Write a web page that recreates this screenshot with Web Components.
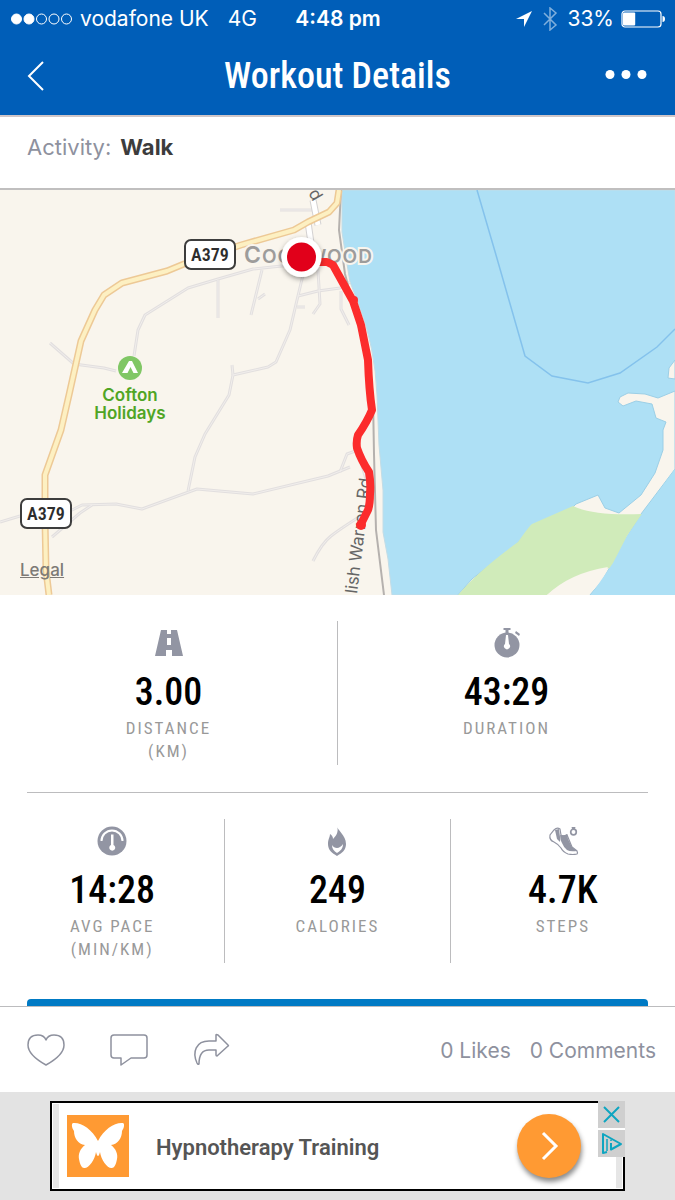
<!DOCTYPE html>
<html lang="en">
<head>
<meta charset="utf-8">
<meta name="viewport" content="width=device-width, initial-scale=1">
<title>Workout Details</title>
<style>
  :root {
    --brand: #005eb8;
    --muted: #8e919e;
    --line: #bcbcbe;
    --font-ui: Inter, "Liberation Sans", sans-serif;
    --font-narrow: "Roboto Condensed", "Liberation Sans Narrow", Roboto, sans-serif;
  }
  body {
    margin: 0;
    background: #fff;
    font-family: var(--font-ui);
  }
</style>
</head>
<body>
<workout-page>
  <status-bar slot="top" carrier="vodafone UK" network="4G" time="4:48 pm" battery="33"></status-bar>
  <nav-header slot="top">Workout Details</nav-header>
  <activity-row name="Walk"></activity-row>
  <route-map></route-map>
  <stat-row>
    <stat-cell icon="road" value="3.00">Distance<br>(km)</stat-cell>
    <stat-cell icon="stopwatch" value="43:29">Duration</stat-cell>
  </stat-row>
  <stat-row>
    <stat-cell icon="gauge" value="14:28">Avg pace<br>(min/km)</stat-cell>
    <stat-cell icon="flame" value="249">Calories</stat-cell>
    <stat-cell icon="shoe" value="4.7K">Steps</stat-cell>
  </stat-row>
  <action-bar slot="bottom" likes="0" comments="0"></action-bar>
  <ad-banner slot="bottom">Hypnotherapy Training</ad-banner>
</workout-page>

<script>
const icons = {
  road: `<path d="M8 3h6v4h4V3h6l6 26H19v-6h-6v6H2zM14 11v7h4v-7z" fill-rule="evenodd"/>`,
  stopwatch: `<path d="M12.500 1h7v2h-2v3h-3V3h-2z"/><path d="M25 4l4 3-1 2-4-3z"/><circle cx="16" cy="18" r="12.500"/><path d="M15 8h2l1 9a3 3 0 1 1-4 0z" fill="#fff"/>`,
  gauge: `<circle cx="16" cy="16" r="14.500"/><path d="M5.500 16a10.500 10.500 0 0 1 21 0" fill="none" stroke="#fff" stroke-width="2"/><path d="M15 9.500h2.500V20a3 3 0 1 1-2.500 0z" fill="#fff"/>`,
  flame: `<path d="M16 1c0 4 9 9 9 18 0 6-4 9-9 12-5-3-9-6-9-12 0-5 2-7 2-10 2 1 3 3 3 5 3-3 6-7 4-13z"/><path d="M11 20c1 2 3 3 5 3s5-2 6-4c0 5-3 7-6 9-3-2-5-4-5-8z" fill="#fff"/>`,
  shoe: `<path d="M7 5q3-3 6-1l1 6q3 2 6 0l5 12 5 4q1 2 0 3-4 1-9 0-5-2-7-6-3-4-7-6-5-2-4-7z" fill="none" stroke="currentColor" stroke-width="1.200"/><path d="M13 10q4 1 7-1l1 5 4 8 5 4q-7 1-10-1-3-2-5-7-2-3-2-8z"/><path d="M8 5l4-1 1 8v5l-3-3z"/><circle cx="26.500" cy="7" r="2.800" fill="none" stroke="currentColor" stroke-width="1.700"/><path d="M24.500 2h4l-1 3h-2z"/>`
};

class WorkoutPage extends HTMLElement {
  constructor() {
    super();
    this.attachShadow({ mode: 'open' }).innerHTML = `
      <style>
        :host { display: flex; flex-direction: column; min-height: 100vh; }
        main { flex: 1; }
        .more {
          height: 7px;
          margin: 9px 27px 0;
          border-radius: 4px 4px 0 0;
          background: #007ac4;
        }
      </style>
      <header><slot name="top"></slot></header>
      <main>
        <slot></slot>
        <div class="more"></div>
      </main>
      <footer><slot name="bottom"></slot></footer>
    `;
  }
}
customElements.define('workout-page', WorkoutPage);

class StatusBar extends HTMLElement {
  constructor() {
    super();
    this.attachShadow({ mode: 'open' });
  }

  connectedCallback() {
    const level = Number(this.getAttribute('battery'));
    this.shadowRoot.innerHTML = `
      <style>
        :host {
          display: grid;
          grid-template-columns: 1fr auto 1fr;
          align-items: center;
          height: 37px;
          padding: 0 10px 0 11px;
          background: var(--brand);
          color: #fff;
          font-size: 21px;
        }
        div { display: flex; align-items: center; }
        .carrier { gap: 8px; }
        .network { margin-left: 11px; }
        .right { justify-content: flex-end; gap: 7px; }
        .time { font-weight: 600; }
      </style>
      <div class="carrier">
        <svg width="61" height="12" fill="none" stroke="#fff" aria-hidden="true">
          <circle cx="5.500" cy="6" r="5" fill="#fff"/><circle cx="18" cy="6" r="5" fill="#fff"/>
          <circle cx="30.500" cy="6" r="5"/><circle cx="43" cy="6" r="5"/><circle cx="55.500" cy="6" r="5"/>
        </svg>
        <span>${this.getAttribute('carrier')}</span>
        <span class="network">${this.getAttribute('network')}</span>
      </div>
      <span class="time">${this.getAttribute('time')}</span>
      <div class="right">
        <svg width="18" height="18" viewBox="0 0 18 18" fill="#fff" aria-hidden="true"><path d="M17 1L9 17V9H1z"/></svg>
        <svg width="20" height="24" viewBox="0 0 20 24" fill="none" stroke="#7fafdc" stroke-width="1.500" aria-hidden="true"><path d="M4 6l12 12-6 5V1l6 5L4 18"/></svg>
        <span>${level}%</span>
        <svg width="44" height="18" viewBox="0 0 44 18" aria-hidden="true">
          <rect x="1" y="1" width="39" height="16" rx="3" fill="none" stroke="#fff" stroke-width="1.200"/>
          <rect x="2" y="2.500" width="${37 * level / 100}" height="13" rx="1" fill="#fff"/>
          <path d="M41.500 6q2.500 0 2.500 3t-2.500 3z" fill="#fff"/>
        </svg>
      </div>
    `;
  }
}
customElements.define('status-bar', StatusBar);

class NavHeader extends HTMLElement {
  constructor() {
    super();
    this.attachShadow({ mode: 'open' }).innerHTML = `
      <style>
        :host {
          display: grid;
          grid-template-columns: 71px 1fr 71px;
          align-items: center;
          height: 78px;
          background: var(--brand);
          color: #fff;
          border-bottom: 2px solid #d0c6c8;
        }
        h1 {
          margin: 0;
          text-align: center;
          font: 500 36px/44px var(--font-narrow);
        }
        button {
          display: grid;
          place-items: center;
          height: 64px;
          padding: 0;
          border: 0;
          background: none;
          color: inherit;
        }
        .menu { width: 98px; justify-self: end; }
      </style>
      <button class="back" aria-label="Back">
        <svg width="20" height="34" viewBox="0 0 20 34" fill="none" stroke="#fff" stroke-width="2"><path d="M17 3L3 17l14 14"/></svg>
      </button>
      <h1><slot></slot></h1>
      <button class="menu" aria-label="More options">
        <svg width="44" height="12" viewBox="0 0 44 12" fill="#fff"><circle cx="6" cy="4.500" r="4.500"/><circle cx="22" cy="4.500" r="4.500"/><circle cx="38" cy="4.500" r="4.500"/></svg>
      </button>
    `;
  }
}
customElements.define('nav-header', NavHeader);

class ActivityRow extends HTMLElement {
  constructor() {
    super();
    this.attachShadow({ mode: 'open' });
  }

  connectedCallback() {
    this.shadowRoot.innerHTML = `
      <style>
        :host {
          display: flex;
          gap: 9px;
          padding: 16px 27px 27px;
          border-bottom: 2px solid #c0bfbf;
          color: var(--muted);
          font-size: 22px;
          line-height: 28px;
        }
        strong { color: #3c3c3c; font-weight: 700; }
      </style>
      <span>Activity:</span>
      <strong>${this.getAttribute('name')}</strong>
    `;
  }
}
customElements.define('activity-row', ActivityRow);

class RouteMap extends HTMLElement {
  constructor() {
    super();
    this.attachShadow({ mode: 'open' }).innerHTML = `
      <style>
        :host { display: block; position: relative; }
        svg { display: block; width: 100%; }
        a {
          position: absolute;
          left: 20px;
          bottom: 15px;
          color: #7d7a76;
          font-size: 17px;
          font-weight: 500;
          line-height: 20px;
        }
        .lane { fill: none; stroke: #e2dfdf; stroke-width: 3; stroke-linejoin: round; }
        .lane-top { fill: none; stroke: #f1eeec; stroke-width: 1; }
        .shield rect { fill: #fff; stroke: #3d3d3d; stroke-width: 2; }
        .shield text { font: 600 18px var(--font-narrow); fill: #2d2d2d; text-anchor: middle; }
        .place { font: 600 17px var(--font-ui); fill: #50a525; text-anchor: middle; stroke: #f9f5ed; stroke-width: 3; paint-order: stroke; }
        .town { font: 600 19px var(--font-ui); fill: #9d9c9b; stroke: #f9f5ed; stroke-width: 4; paint-order: stroke; letter-spacing: 1px; }
        .street { font: 400 17px var(--font-ui); fill: #666; }
      </style>
      <svg viewBox="0 190 675 405" role="img" aria-label="Route map">
        <defs>
          <filter id="shadow" x="-40%" y="-40%" width="180%" height="180%">
            <feDropShadow dx="0" dy="2" stdDeviation="2.500" flood-opacity=".4"/>
          </filter>
          <g id="lanes">
            <path d="M300 264L253 269 218 279 188 288 145 315 138 330 134 356"/>
            <path d="M218 280v38"/>
            <path d="M262 270L251 315M258 299l7-5"/>
            <path d="M303 275L297 300 290 330 276 362 268 367 233 375 229 395 205 434 195 457 188 491"/>
            <path d="M233 375l-1-10M298 296l20-5 22-3 10-6M297 307h8"/>
            <path d="M317 255l2 32 1 17-7 10"/>
            <path d="M50 343l24 21 30 4 12 3"/>
            <path d="M0 522L20 516M70 511l12-6 34-1 26 5 55-20 56 5 75-18 22-9"/>
            <path d="M52 537l28-24 12-8M340 472l7-18 14-5"/>
            <path d="M313 561q9-18 18-25t28-19"/>
            <path d="M280 210h32"/>
            <path d="M341 291v18l8 16M366 342l6 50-4 28-12 23 4 16 6 20"/>
          </g>
          <path id="main-road" d="M339 190l-2 13-8 9-21 10-14 8-53 15-57 19-17 7-45 12-18 12-9 15-14 31-12 54-8 35-16 45v45l1 50 3 25"/>
        </defs>

        <rect y="190" width="675" height="405" fill="#f9f5ed"/>
        <path d="M342 190v42l5 32 3 18 9 23q16 42 18 90l2 50 4 45v42l5 27 4 36H675V190z" fill="#aee0f5" stroke="#c2dce6" stroke-width="1"/>
        <path d="M477 190l19 65 29 101 27 20 36 7 32-10 37-26 18-18" fill="none" stroke="#84c2ec" stroke-width="1.500"/>

        <!-- sandbank and the warren -->
        <path d="M675 360l-6 8-1 10 7 1zM675 391l-17 7-13-4-17-1-8 4-2 5 5 4 13-5 16 3 4 14 10 4-3 8v20l-8 23-14 22-22 18-14-5-7-13-22 9-10 10-35 12-13 17-46 36-15 17h132l13-15 25-44 14-23 34-45z" fill="#f9f5ed" stroke="#9ccfe6" stroke-width="1"/>
        <path d="M573 506q20 10 69 8l-15 22-9 31q-43 4-71 28h-89q20-24 60-53 12-17 14-18z" fill="#d0ebba"/>
        <path d="M608 567q-38 6-61 28h42z" fill="#f9f5ed"/>
        <path d="M642 514l-15 22-14 27-22 32h84V469z" fill="#aee0f5"/>

        <g class="lane"><use href="#lanes"/></g>
        <g class="lane-top"><use href="#lanes"/></g>

        <g fill="none" stroke-linejoin="round">
          <path d="M341 190l-2 40 6 44 9 34 10 40 9 50 1 56 2 76 8 65" stroke="#b5b1ae" stroke-width="2"/>
          <path d="M313 200l5 25M308 222l4 28" stroke="#d4d2d2" stroke-width="7"/>
          <path d="M313 200l5 25M308 222l4 28" stroke="#fff" stroke-width="5"/>
          <use href="#main-road" stroke="#edc996" stroke-width="7"/>
          <use href="#main-road" stroke="#fdf0c2" stroke-width="4"/>
        </g>

        <text class="street" transform="translate(357 594) rotate(-83)">lish Warren Rd</text>
        <text class="street" transform="translate(308 193) rotate(60)">d</text>
        <text class="town" x="244" y="263"><tspan font-size="23">C</tspan>OCKWOOD</text>

        <path d="M312 262h15l6 3 20 36 8 24 7 35q1 30 4 50-5 12-14 25-2 6-1 13 4 12 12 24 2 12 1 22 0 10-2 16l-7 14" fill="none" stroke="#fc2c2c" stroke-width="8" stroke-linecap="round" stroke-linejoin="round"/>
        <circle cx="354" cy="300" r="4" fill="#fc2c2c"/>
        <circle cx="361" cy="525" r="5" fill="#fc2c2c"/>

        <g filter="url(#shadow)"><circle cx="301.500" cy="257" r="20" fill="#fff"/></g>
        <circle cx="301.500" cy="257" r="14.500" fill="#e1001a"/>

        <g class="shield">
          <rect x="185" y="240" width="50" height="29" rx="6"/><text x="210" y="261">A379</text>
          <rect x="21" y="499" width="50" height="29" rx="6"/><text x="46" y="520">A379</text>
        </g>

        <circle cx="130" cy="368" r="12" fill="#80c765"/>
        <path d="M129 361h3l6 12h-16zM130.500 367l-3 6h6z" fill="#fff" fill-rule="evenodd"/>
        <text class="place" x="130" y="401">Cofton</text>
        <text class="place" x="130" y="419">Holidays</text>
      </svg>
      <a href="#legal">Legal</a>
    `;
  }
}
customElements.define('route-map', RouteMap);

class StatRow extends HTMLElement {
  constructor() {
    super();
    this.attachShadow({ mode: 'open' }).innerHTML = `
      <style>
        :host { display: block; }
        .cells { display: flex; padding: 26px 0 27px; }
        hr { margin: 0 27px; border: 0; border-top: 1px solid var(--line); }
        :host(:last-of-type) hr { display: none; }
        ::slotted(*) { flex: 1; }
        ::slotted(:not(:first-child)) { border-left: 1px solid var(--line); }
      </style>
      <div class="cells"><slot></slot></div>
      <hr>
    `;
  }
}
customElements.define('stat-row', StatRow);

class StatCell extends HTMLElement {
  constructor() {
    super();
    this.attachShadow({ mode: 'open' });
  }

  connectedCallback() {
    this.shadowRoot.innerHTML = `
      <style>
        :host {
          display: flex;
          flex-direction: column;
          align-items: center;
          box-sizing: border-box;
          min-height: 144px;
          padding-top: 6px;
          text-align: center;
        }
        svg { width: 32px; height: 32px; fill: currentColor; color: #9295a3; }
        .value { margin-top: 11px; font: 500 38px/44px var(--font-narrow); color: #000; }
        .label { margin-top: 3px; font: 400 17px/23px var(--font-narrow); color: #999; letter-spacing: 2px; text-transform: uppercase; }
      </style>
      <svg viewBox="0 0 32 32" aria-hidden="true">${icons[this.getAttribute('icon')]}</svg>
      <div class="value">${this.getAttribute('value')}</div>
      <div class="label"><slot></slot></div>
    `;
  }
}
customElements.define('stat-cell', StatCell);

class ActionBar extends HTMLElement {
  constructor() {
    super();
    this.attachShadow({ mode: 'open' });
  }

  connectedCallback() {
    this.shadowRoot.innerHTML = `
      <style>
        :host {
          display: flex;
          align-items: center;
          justify-content: space-between;
          height: 85px;
          padding: 0 19px 0 26px;
          border-top: 1px solid var(--line);
          background: #fff;
          color: var(--muted);
          font-size: 21px;
        }
        div { display: flex; gap: 43px; }
        .counts { gap: 19px; padding-top: 2px; }
        button { padding: 0; border: 0; background: none; color: inherit; }
        svg { display: block; fill: none; stroke: currentColor; stroke-width: 1.500; stroke-linejoin: round; }
      </style>
      <div>
        <button aria-label="Like"><svg width="40" height="34" viewBox="0 0 40 34"><path d="M20 32Q2 22 2 12 2 2 12 2q6 0 8 5 2-5 8-5 10 0 10 10 0 10-18 20z"/></svg></button>
        <button aria-label="Comment"><svg width="40" height="34" viewBox="0 0 40 34"><path d="M5 2h30q3 0 3 3v17q0 3-3 3H22l-10 7v-7H5q-3 0-3-3V5q0-3 3-3z"/></svg></button>
        <button aria-label="Share"><svg width="40" height="34" viewBox="0 0 40 34"><path d="M24 2q0-1 2 0l10 10q1 1 0 1L25 23q-1 0-1-1v-5h-7Q7 17 7 31q-1 1-2-1C0 19 4 8 17 8h7z"/></svg></button>
      </div>
      <div class="counts">
        <span>${this.getAttribute('likes')} Likes</span>
        <span>${this.getAttribute('comments')} Comments</span>
      </div>
    `;
  }
}
customElements.define('action-bar', ActionBar);

class AdBanner extends HTMLElement {
  constructor() {
    super();
    this.attachShadow({ mode: 'open' }).innerHTML = `
      <style>
        :host { display: block; padding: 9px 50px; background: #e3e3e3; }
        .ad {
          position: relative;
          display: flex;
          align-items: center;
          box-sizing: border-box;
          height: 90px;
          padding: 0 36px 0 8px;
          border: 2px solid #000;
          background: #fff;
          box-shadow: inset 0 0 0 1px #fff, inset 7px 0 #e6e6e6, inset -7px 0 #e6e6e6;
        }
        .logo { margin-left: 7px; background: #ff9a33; }
        .title { flex: 1; margin-left: 27px; padding-top: 4px; color: #555; font: 600 22px/28px Roboto, sans-serif; text-decoration: none; }
        button { display: grid; place-items: center; padding: 0; border: 0; }
        .go {
          width: 64px;
          height: 64px;
          margin-right: 6px;
          border-radius: 50%;
          background: #ff9a33;
          box-shadow: 1px 4px 5px rgba(0, 0, 0, .45);
        }
        .tools { position: absolute; top: -2px; right: -2px; display: grid; gap: 2px; background: #fff; }
        .tools button { width: 27px; height: 27px; background: #cfcfcf; }
      </style>
      <div class="ad">
        <svg class="logo" width="62" height="62" viewBox="0 0 62 62" fill="#fff" aria-hidden="true">
          <path id="wing" d="M31 26C25 14 14 7 6 8 4 9 5 13 7 16 7 23 11 29 18 30 13 34 11 39 12 44 13 50 15 53 17 53 21 54 28 45 29 37Q30 41 31 41z"/>
          <use href="#wing" transform="matrix(-1 0 0 1 62 0)"/>
        </svg>
        <a class="title" href="#ad"><slot></slot></a>
        <button class="go" aria-label="Open">
          <svg width="20" height="32" viewBox="0 0 20 32" fill="none" stroke="#fff" stroke-width="3"><path d="M4 3l13 13L4 29"/></svg>
        </button>
        <div class="tools">
          <button aria-label="Close ad"><svg width="19" height="19" viewBox="0 0 19 19" stroke="#0ea5c0" stroke-width="2"><path d="M2 2l15 15M17 2L2 17"/></svg></button>
          <button aria-label="Ad choices"><svg width="23" height="23" viewBox="0 0 23 23" fill="none" stroke="#0ea5c0" stroke-width="2" stroke-linejoin="round"><path d="M7 20l-4 1V2l18 10-10 5.500V11"/><path d="M7 7v12M11 7.500v1.500" stroke-width="1.500"/></svg></button>
        </div>
      </div>
    `;
  }
}
customElements.define('ad-banner', AdBanner);
</script>
</body>
</html>
